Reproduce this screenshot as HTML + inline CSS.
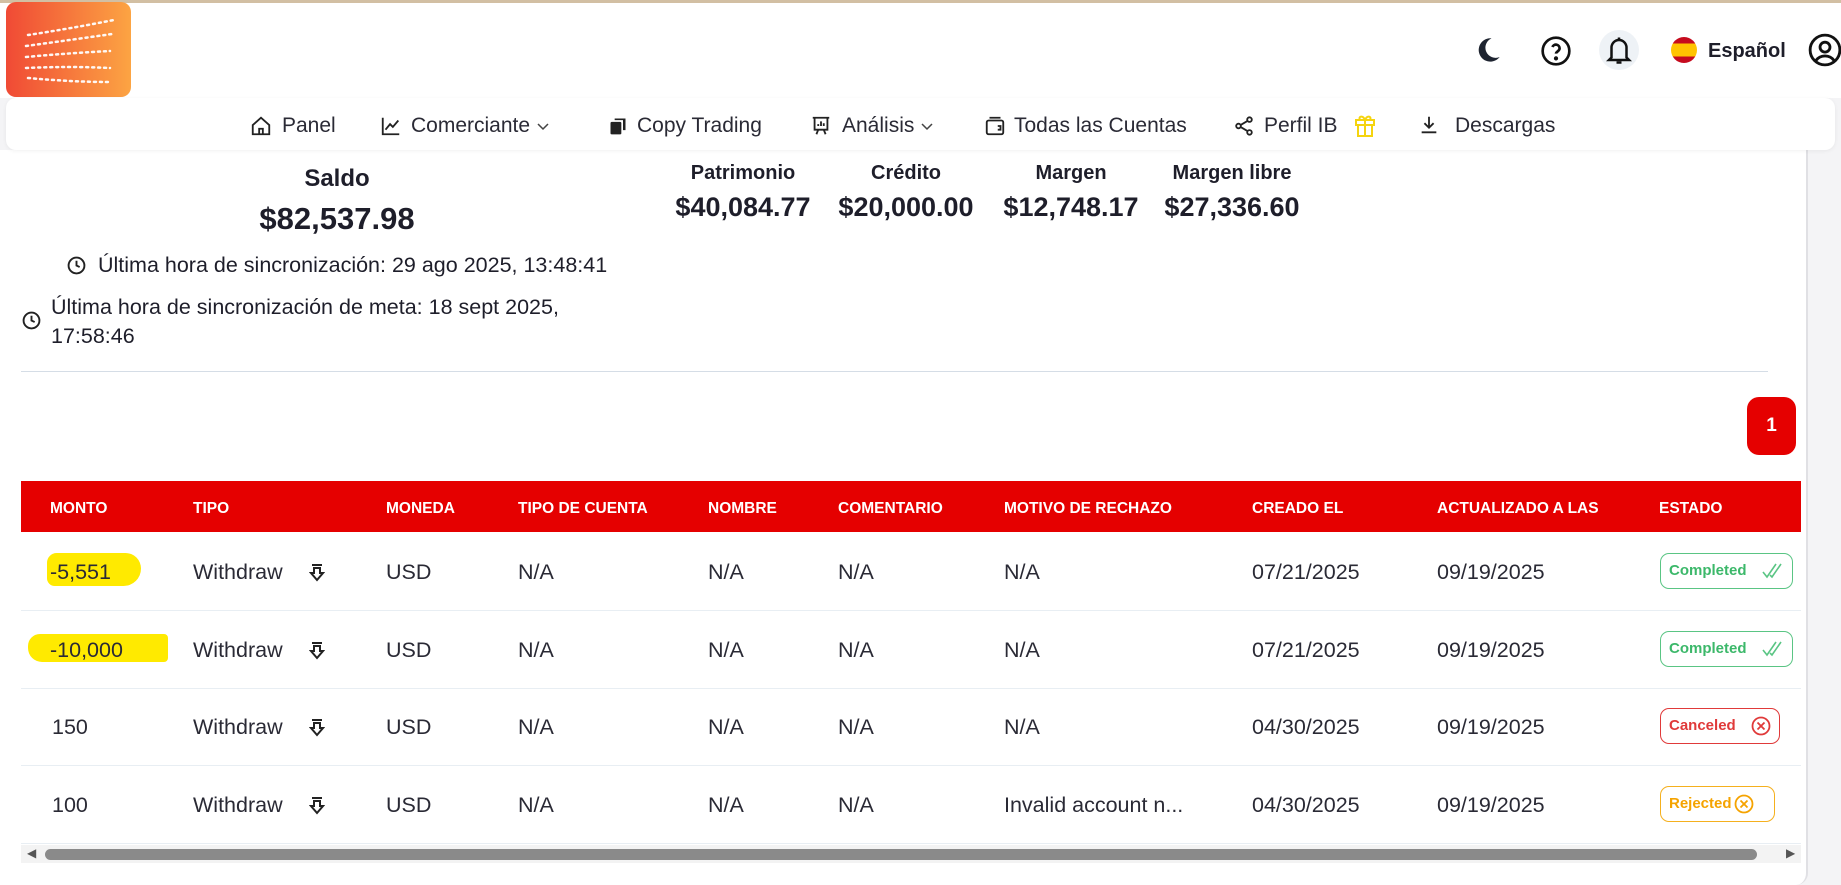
<!DOCTYPE html>
<html><head><meta charset="utf-8"><style>
*{margin:0;padding:0;box-sizing:border-box}
body{width:1841px;height:885px;background:#f4f4f6;font-family:"Liberation Sans",sans-serif;color:#1e1e2a;position:relative;overflow:hidden}
.a{position:absolute;white-space:nowrap}
.top{position:absolute;left:0;top:0;width:1841px;height:98px;background:#fff;border-top:3px solid #d2bfa3}
.logo{position:absolute;left:6px;top:2px;width:125px;height:95px;border-radius:10px;background:linear-gradient(90deg,#f04a35,#fca443)}
.nav{position:absolute;left:6px;top:98px;width:1829px;height:52px;background:#fff;border-radius:10px;box-shadow:0 1px 4px rgba(0,0,0,.06)}
.nav .a{font-size:21px;top:16px;color:#2a2a35}
.card{position:absolute;left:0;top:150px;width:1808px;height:735px;background:#fff;border-radius:0 0 12px 0;border-right:2px solid #e0e0e4}
.lbl{font-weight:bold;font-size:21px;transform:translateX(-50%)}
.val{font-weight:bold;font-size:27px;transform:translateX(-50%)}
.hdr{position:absolute;left:21px;top:481px;width:1780px;height:51px;background:#e50000}
.h{color:#fff;font-weight:bold;font-size:15.5px;top:500px}
.c{font-size:21.5px;color:#2a2a35}
.row{position:absolute;left:21px;width:1780px;height:1px;background:#e8eef3}
.b{position:absolute;height:36px;border:1.5px solid;border-radius:9px;font-weight:bold;font-size:15px;padding:0 8px;line-height:33px}
.b svg{position:absolute;right:8px;top:8px}
</style></head><body>
<div class="top"></div>
<div class="logo"><svg width="125" height="95" viewBox="0 0 125 95"><g stroke="#fff" stroke-width="2.5" stroke-linecap="round" fill="none" opacity=".95">
<path d="M22 33q40 -6 86 -15" stroke-dasharray="2 4"/><path d="M20 44q44 -6 86 -12" stroke-dasharray="2 4"/><path d="M20 55q44 -4 84 -6" stroke-dasharray="2 4"/><path d="M20 66q44 -2 84 0" stroke-dasharray="2 4"/><path d="M22 76q44 4 82 4" stroke-dasharray="2 4"/></g></svg></div>
<svg class="a" style="left:1474px;top:36px" width="28" height="28" viewBox="0 0 24 24"><path d="M15 2a10 10 0 1 0 7 16A8 8 0 0 1 15 2z" fill="#1e2430"/></svg>
<svg class="a" style="left:1540px;top:35px" width="32" height="32" viewBox="0 0 24 24" fill="none" stroke="#111" stroke-width="2"><circle cx="12" cy="12" r="10"/><path d="M9.3 9a2.8 2.8 0 0 1 5.4 1c0 2-2.7 2.5-2.7 4"/><circle cx="12" cy="17.5" r=".6" fill="#111"/></svg>
<div class="a" style="left:1599px;top:30px;width:40px;height:40px;border-radius:50%;background:#eef2f6"></div>
<svg class="a" style="left:1604px;top:33px" width="30" height="34" viewBox="0 0 24 26" fill="none" stroke="#111" stroke-width="2"><path d="M6 19V11a6 6 0 0 1 12 0v8l2 2H4z"/><path d="M12 3v2M10 23h4"/></svg>
<div class="a" style="left:1671px;top:37px;width:26px;height:26px;border-radius:50%;background:linear-gradient(#c60b1e 0 25%,#ffc400 25% 75%,#c60b1e 75%)"></div>
<div class="a" style="left:1708px;top:40px;font-size:20px;font-weight:bold">Español</div>
<svg class="a" style="left:1808px;top:33px" width="34" height="34" viewBox="0 0 24 24" fill="none" stroke="#111" stroke-width="2"><circle cx="12" cy="12" r="10.5"/><circle cx="12" cy="10" r="3.5"/><path d="M5.5 19.5a8 8 0 0 1 13 0"/></svg>
<div class="card"></div>
<div class="nav">
<svg class="a" style="left:244px;top:17px" width="22" height="22" viewBox="0 0 24 24" fill="none" stroke="#222" stroke-width="2"><path d="M3 11l9-8 9 8v10H3z"/><path d="M10 21v-6h4v6"/></svg>
<div class="a" style="left:276px">Panel</div>
<svg class="a" style="left:374px;top:17px" width="22" height="22" viewBox="0 0 24 24" fill="none" stroke="#222" stroke-width="2"><path d="M3 3v18h18"/><path d="M6 16l5-6 3 3 6-7"/></svg>
<div class="a" style="left:405px">Comerciante <svg width="14" height="10" viewBox="0 0 14 10" fill="none" stroke="#444" stroke-width="1.5"><path d="M2 2l5 5 5-5"/></svg></div>
<svg class="a" style="left:602px;top:18px" width="20" height="20" viewBox="0 0 24 24" fill="#222"><rect x="3" y="7" width="13" height="15" rx="1.5"/><path d="M8 5V3h13v14h-3V5z"/></svg>
<div class="a" style="left:631px">Copy Trading</div>
<svg class="a" style="left:804px;top:17px" width="22" height="22" viewBox="0 0 24 24" fill="none" stroke="#222" stroke-width="2"><path d="M3 3h18M5 3v13h14V3M9 16l-2 5M15 16l2 5M9 12v-2M12 12V7M15 12V9"/></svg>
<div class="a" style="left:836px">Análisis <svg width="14" height="10" viewBox="0 0 14 10" fill="none" stroke="#444" stroke-width="1.5"><path d="M2 2l5 5 5-5"/></svg></div>
<svg class="a" style="left:978px;top:17px" width="22" height="22" viewBox="0 0 24 24" fill="none" stroke="#222" stroke-width="2"><rect x="3" y="6" width="18" height="15" rx="2"/><path d="M6 3h12M15 12h3v4h-3"/></svg>
<div class="a" style="left:1008px">Todas las Cuentas</div>
<svg class="a" style="left:1227px;top:17px" width="22" height="22" viewBox="0 0 24 24" fill="none" stroke="#222" stroke-width="2"><circle cx="18" cy="5" r="2.5"/><circle cx="6" cy="12" r="2.5"/><circle cx="18" cy="19" r="2.5"/><path d="M8.2 11l7.6-4.5M8.2 13l7.6 4.5"/></svg>
<div class="a" style="left:1258px">Perfil IB</div>
<svg class="a" style="left:1347px;top:13px" width="24" height="28" viewBox="0 0 24 26" fill="none" stroke="#f5d40f" stroke-width="2"><rect x="3" y="8" width="18" height="5"/><path d="M5 13v11h14v-11M12 8v16M12 8c-2-5-7-4-5 0M12 8c2-5 7-4 5 0"/></svg>
<svg class="a" style="left:1412px;top:16px" width="22" height="22" viewBox="0 0 24 24" fill="none" stroke="#222" stroke-width="2"><path d="M12 3v12M7 10l5 5 5-5M4 20h16"/></svg>
<div class="a" style="left:1449px">Descargas</div>
</div>
<div class="a lbl" style="left:337px;top:165px;font-size:24px">Saldo</div>
<div class="a" style="left:337px;top:201px;font-weight:bold;font-size:31px;transform:translateX(-50%)">$82,537.98</div>
<div class="a lbl" style="left:743px;top:162px;font-size:20px">Patrimonio</div>
<div class="a lbl" style="left:906px;top:162px;font-size:20px">Crédito</div>
<div class="a lbl" style="left:1071px;top:162px;font-size:20px">Margen</div>
<div class="a lbl" style="left:1232px;top:162px;font-size:20px">Margen libre</div>
<div class="a val" style="left:743px;top:192px">$40,084.77</div>
<div class="a val" style="left:906px;top:192px">$20,000.00</div>
<div class="a val" style="left:1071px;top:192px">$12,748.17</div>
<div class="a val" style="left:1232px;top:192px">$27,336.60</div>
<svg class="a" style="left:67px;top:256px" width="19" height="19" viewBox="0 0 24 24" fill="none" stroke="#222" stroke-width="2.4"><circle cx="12" cy="12" r="10"/><path d="M12 6v6l4 2"/></svg>
<div class="a" style="left:98px;top:253px;font-size:21.5px">Última hora de sincronización: 29 ago 2025, 13:48:41</div>
<svg class="a" style="left:22px;top:311px" width="19" height="19" viewBox="0 0 24 24" fill="none" stroke="#222" stroke-width="2.4"><circle cx="12" cy="12" r="10"/><path d="M12 6v6l4 2"/></svg>
<div class="a" style="left:51px;top:295px;font-size:21.5px">Última hora de sincronización de meta: 18 sept 2025,</div>
<div class="a" style="left:51px;top:324px;font-size:21.5px">17:58:46</div>
<div class="a" style="left:21px;top:371px;width:1747px;height:1px;background:#d5dde6"></div>
<div class="a" style="left:1747px;top:397px;width:49px;height:58px;border-radius:12px;background:#e50000;color:#fff;font-weight:bold;font-size:19px;text-align:center;line-height:58px">1</div>
<div class="hdr"></div>
<div class="a h" style="left:50px">MONTO</div><div class="a h" style="left:193px">TIPO</div><div class="a h" style="left:386px">MONEDA</div><div class="a h" style="left:518px">TIPO DE CUENTA</div><div class="a h" style="left:708px">NOMBRE</div><div class="a h" style="left:838px">COMENTARIO</div><div class="a h" style="left:1004px">MOTIVO DE RECHAZO</div><div class="a h" style="left:1252px">CREADO EL</div><div class="a h" style="left:1437px">ACTUALIZADO A LAS</div><div class="a h" style="left:1659px">ESTADO</div>
<div class="a" style="left:47px;top:553px;width:94px;height:33px;background:#ffea00;border-radius:10px 16px 18px 8px"></div>
<div class="a" style="left:28px;top:634px;width:140px;height:28px;background:#ffea00;border-radius:12px 4px 4px 14px"></div>
<div class="row" style="top:610px"></div><div class="row" style="top:688px"></div><div class="row" style="top:765px"></div><div class="row" style="top:843px"></div>
<div class="a c" style="left:50px;top:560px">-5,551</div>
<div class="a c" style="left:50px;top:638px">-10,000</div>
<div class="a c" style="left:52px;top:715px">150</div>
<div class="a c" style="left:52px;top:793px">100</div>
<div class="a c" style="left:193px;top:560px">Withdraw</div><div class="a c" style="left:193px;top:638px">Withdraw</div><div class="a c" style="left:193px;top:715px">Withdraw</div><div class="a c" style="left:193px;top:793px">Withdraw</div>
<svg class="a" style="left:309px;top:563px" width="16" height="20" viewBox="0 0 16 20" fill="none" stroke="#222" stroke-width="2"><path d="M3 2h10M5 5h6v5h3l-6 7-6-7h3z"/></svg>
<svg class="a" style="left:309px;top:641px" width="16" height="20" viewBox="0 0 16 20" fill="none" stroke="#222" stroke-width="2"><path d="M3 2h10M5 5h6v5h3l-6 7-6-7h3z"/></svg>
<svg class="a" style="left:309px;top:718px" width="16" height="20" viewBox="0 0 16 20" fill="none" stroke="#222" stroke-width="2"><path d="M3 2h10M5 5h6v5h3l-6 7-6-7h3z"/></svg>
<svg class="a" style="left:309px;top:796px" width="16" height="20" viewBox="0 0 16 20" fill="none" stroke="#222" stroke-width="2"><path d="M3 2h10M5 5h6v5h3l-6 7-6-7h3z"/></svg>
<div class="a c" style="left:386px;top:560px">USD</div><div class="a c" style="left:386px;top:638px">USD</div><div class="a c" style="left:386px;top:715px">USD</div><div class="a c" style="left:386px;top:793px">USD</div>
<div class="a c" style="left:518px;top:560px">N/A</div><div class="a c" style="left:518px;top:638px">N/A</div><div class="a c" style="left:518px;top:715px">N/A</div><div class="a c" style="left:518px;top:793px">N/A</div>
<div class="a c" style="left:708px;top:560px">N/A</div><div class="a c" style="left:708px;top:638px">N/A</div><div class="a c" style="left:708px;top:715px">N/A</div><div class="a c" style="left:708px;top:793px">N/A</div>
<div class="a c" style="left:838px;top:560px">N/A</div><div class="a c" style="left:838px;top:638px">N/A</div><div class="a c" style="left:838px;top:715px">N/A</div><div class="a c" style="left:838px;top:793px">N/A</div>
<div class="a c" style="left:1004px;top:560px">N/A</div><div class="a c" style="left:1004px;top:638px">N/A</div><div class="a c" style="left:1004px;top:715px">N/A</div><div class="a c" style="left:1004px;top:793px">Invalid account n...</div>
<div class="a c" style="left:1252px;top:560px">07/21/2025</div><div class="a c" style="left:1252px;top:638px">07/21/2025</div><div class="a c" style="left:1252px;top:715px">04/30/2025</div><div class="a c" style="left:1252px;top:793px">04/30/2025</div>
<div class="a c" style="left:1437px;top:560px">09/19/2025</div><div class="a c" style="left:1437px;top:638px">09/19/2025</div><div class="a c" style="left:1437px;top:715px">09/19/2025</div><div class="a c" style="left:1437px;top:793px">09/19/2025</div>
<div class="b" style="left:1660px;top:553px;width:133px;color:#3cb86a;border-color:#5ac584">Completed<svg width="22" height="18" viewBox="0 0 22 18" fill="none" stroke="#5ac584" stroke-width="1.6"><path d="M1 10l4 5 9-13M8 13l2 2 9-13"/></svg></div>
<div class="b" style="left:1660px;top:631px;width:133px;color:#3cb86a;border-color:#5ac584">Completed<svg width="22" height="18" viewBox="0 0 22 18" fill="none" stroke="#5ac584" stroke-width="1.6"><path d="M1 10l4 5 9-13M8 13l2 2 9-13"/></svg></div>
<div class="b" style="left:1660px;top:708px;width:120px;color:#e03a3a;border-color:#e03a3a">Canceled<svg width="20" height="20" viewBox="0 0 20 20" fill="none" stroke="#e03a3a" stroke-width="1.8" style="top:7px"><circle cx="10" cy="10" r="8.5"/><path d="M6.5 6.5l7 7M13.5 6.5l-7 7"/></svg></div>
<div class="b" style="left:1660px;top:786px;width:115px;color:#f5a300;border-color:#f5b01e">Rejected<svg width="20" height="20" viewBox="0 0 20 20" fill="none" stroke="#f5a300" stroke-width="1.8" style="top:7px;right:20px"><circle cx="10" cy="10" r="8.5"/><path d="M6.5 6.5l7 7M13.5 6.5l-7 7"/></svg></div>
<div class="a" style="left:21px;top:845px;width:1780px;height:18px;background:#f3f3f3"></div>
<div class="a" style="left:45px;top:849px;width:1712px;height:11px;border-radius:6px;background:#8a8a8a"></div>
<div class="a" style="left:27px;top:846px;font-size:12px;color:#555">◀</div>
<div class="a" style="left:1786px;top:846px;font-size:12px;color:#555">▶</div>
</body></html>
